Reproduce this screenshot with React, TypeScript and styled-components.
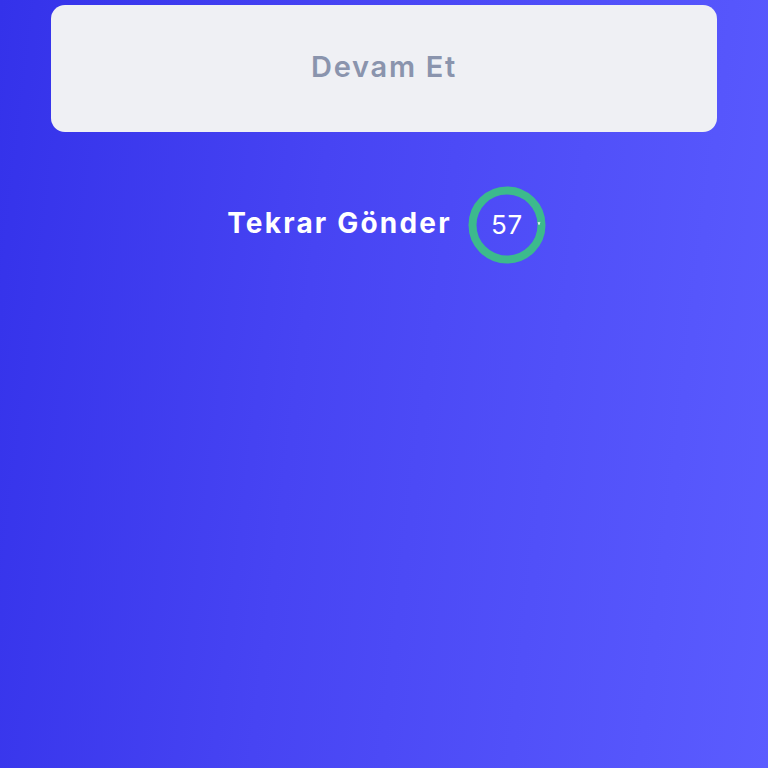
import styled, { createGlobalStyle } from "styled-components";

const GlobalStyle = createGlobalStyle`
  html, body {
    margin: 0;
    padding: 0;
  }
  body {
    font-family: Inter, "Open Sans", sans-serif;
  }
`;

function App() {
  const seconds = 57;
  return (
    <Screen>
      <GlobalStyle />
      <ContinueButton type="button">Devam Et</ContinueButton>
      <ResendRow>
        <ResendLabel>Tekrar Gönder</ResendLabel>
        <Countdown>
          <svg width="78" height="78" viewBox="0 0 78 78">
            <circle cx="39" cy="39" r="34.5" fill="none" stroke="#3cba8d" strokeWidth="8" />
            <path d="M70.3 36.4 L71 38.6 L71.8 36.3" fill="none" stroke="#ffffff" strokeWidth="1" strokeLinecap="round" opacity="0.85" />
          </svg>
          <CountText>{seconds}</CountText>
        </Countdown>
      </ResendRow>
    </Screen>
  );
}

export default App;

const Screen = styled.main`
  min-height: 100vh;
  box-sizing: border-box;
  padding: 5px 51px 0;
  display: flex;
  flex-direction: column;
  align-items: stretch;
  background: linear-gradient(97deg, #3432ea 0%, #4744f3 40%, #5b5cff 100%);
`;

const ContinueButton = styled.button`
  height: 127px;
  border: none;
  border-radius: 14px;
  background: #eff0f4;
  color: #8a94ad;
  font-family: Inter, "Open Sans", sans-serif;
  font-size: 29px;
  font-weight: 600;
  letter-spacing: 1.7px;
  padding-bottom: 5px;
  cursor: pointer;
`;

const ResendRow = styled.div`
  margin-top: 54px;
  display: flex;
  align-items: center;
  justify-content: center;
  gap: 16px;
  padding-left: 5px;
`;

const ResendLabel = styled.span`
  color: #ffffff;
  font-size: 28px;
  font-weight: 700;
  letter-spacing: 2.2px;
  margin-top: -4px;
`;

const Countdown = styled.div`
  position: relative;
  width: 78px;
  height: 78px;
  display: flex;
  align-items: center;
  justify-content: center;
  svg {
    position: absolute;
    inset: 0;
  }
`;

const CountText = styled.span`
  position: relative;
  color: #ffffff;
  font-size: 26px;
  font-weight: 400;
  letter-spacing: 0.5px;
  margin-top: -2px;
`;
